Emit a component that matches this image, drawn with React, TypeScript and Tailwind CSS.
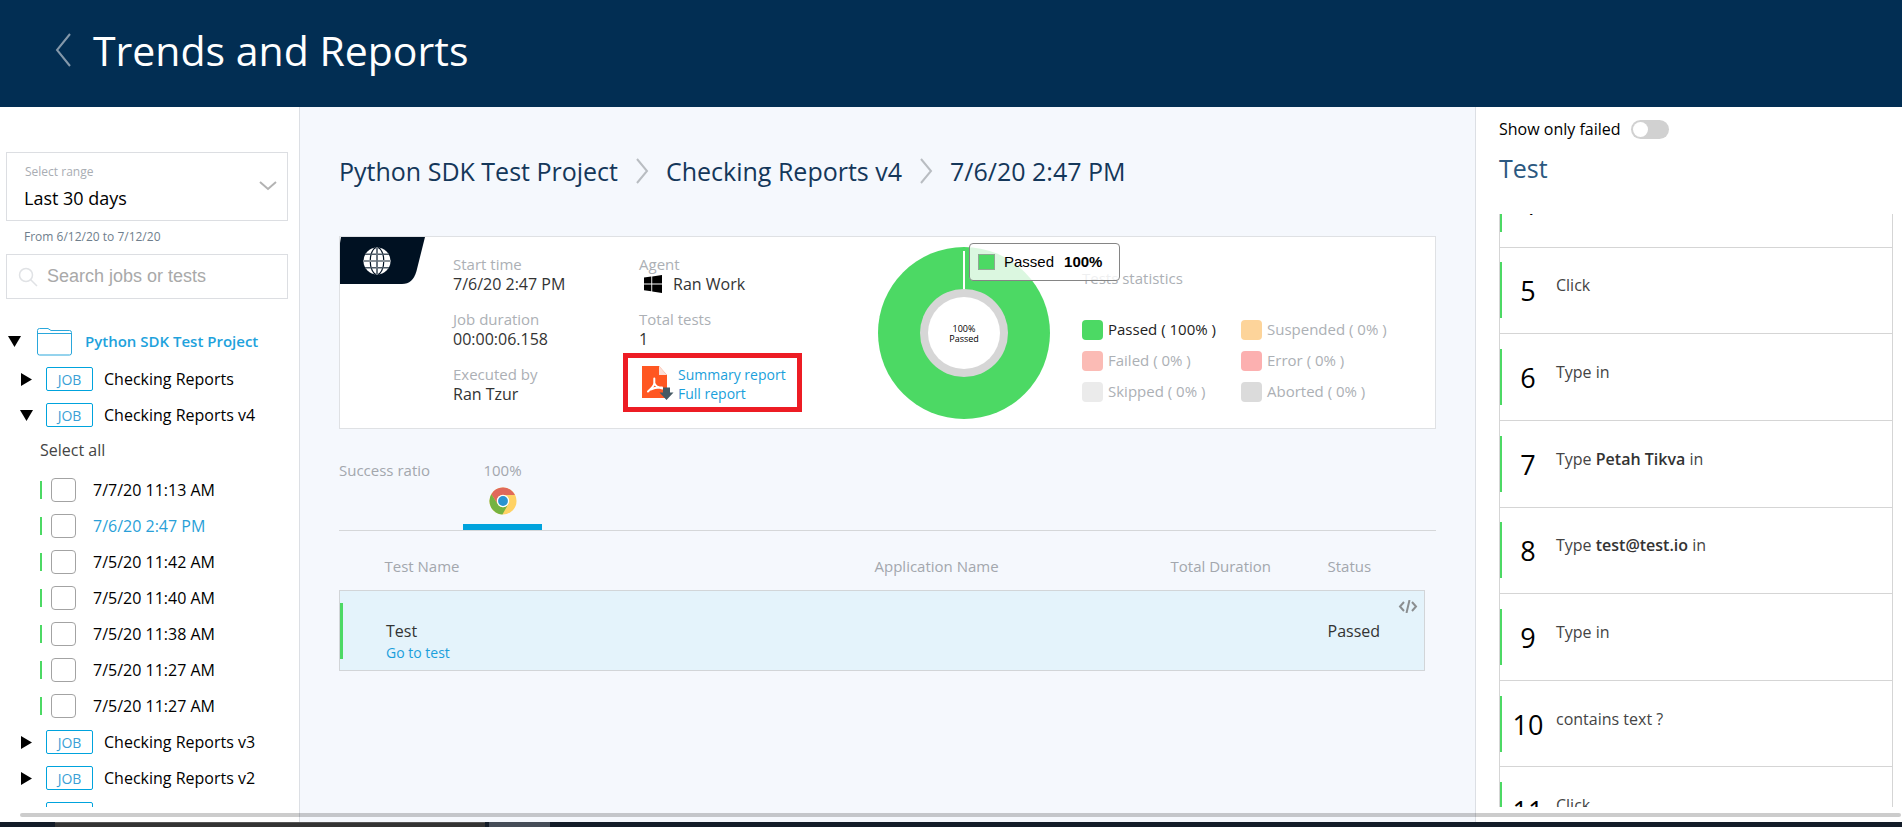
import { useState } from "react";

const jobRuns = [
  "7/7/20 11:13 AM",
  "7/6/20 2:47 PM",
  "7/5/20 11:42 AM",
  "7/5/20 11:40 AM",
  "7/5/20 11:38 AM",
  "7/5/20 11:27 AM",
  "7/5/20 11:27 AM",
];
const selectedRun = 1;

const statistics = [
  { label: "Passed ( 100% )", swatch: "bg-[#4cd964]", text: "text-[#222]" },
  { label: "Suspended ( 0% )", swatch: "bg-[#fdd49a]", text: "text-[#acb0b5]" },
  { label: "Failed ( 0% )", swatch: "bg-[#fbbbb5]", text: "text-[#acb0b5]" },
  { label: "Error ( 0% )", swatch: "bg-[#fcb0b0]", text: "text-[#acb0b5]" },
  { label: "Skipped ( 0% )", swatch: "bg-[#ebebeb]", text: "text-[#acb0b5]" },
  { label: "Aborted ( 0% )", swatch: "bg-[#dbdbdb]", text: "text-[#acb0b5]" },
];

const steps = [
  { n: 4, before: "Click" },
  { n: 5, before: "Click" },
  { n: 6, before: "Type in" },
  { n: 7, before: "Type ", value: "Petah Tikva", after: " in" },
  { n: 8, before: "Type ", value: "test@test.io", after: " in" },
  { n: 9, before: "Type in" },
  { n: 10, before: "contains text ?" },
  { n: 11, before: "Click" },
];

function Arrow({ open }: { open: boolean }) {
  return open ? (
    <svg width="13" height="11" viewBox="0 0 13 11" aria-hidden="true">
      <path d="M0 0h13L6.5 11z" fill="#000" />
    </svg>
  ) : (
    <svg width="13" height="13" viewBox="0 0 13 13" aria-hidden="true">
      <path d="M1 0v13L12 6.500z" fill="#000" />
    </svg>
  );
}

function JobRow({ name, open = false }: { name: string; open?: boolean }) {
  return (
    <button type="button" className="flex h-9 w-full shrink-0 items-center pl-5 text-left">
      <Arrow open={open} />
      <span className="ml-[13px] flex h-6 w-[47px] items-center justify-center rounded-xs border border-[#00a3dd] text-[14px] text-[#3a9fd6]">
        JOB
      </span>
      <span className="ml-[11px] text-[16px] text-black">{name}</span>
    </button>
  );
}

function Crumb() {
  return (
    <svg width="14" height="26" viewBox="0 0 14 26" className="mx-[17px]" aria-hidden="true">
      <path d="M2 1l10 12L2 25" fill="none" stroke="#b9bdc2" strokeWidth="2" />
    </svg>
  );
}

function Globe() {
  return (
    <svg width="28" height="28" viewBox="0 0 28 28" aria-hidden="true">
      <circle cx="14" cy="14" r="13.500" fill="#fff" />
      <g fill="none" stroke="#001122" strokeWidth="1.200">
        <ellipse cx="14" cy="14" rx="6.800" ry="13.500" />
        <path d="M2 7.300h24M2 20.700h24" stroke="#4d5a66" strokeWidth="1.600" />
        <path d="M0 14h28" stroke="#8a9299" strokeWidth="2" />
        <path d="M14 0v28" stroke="#6a757f" strokeWidth="2" />
      </g>
    </svg>
  );
}

function WindowsLogo() {
  return (
    <svg width="18" height="18" viewBox="0 0 18 18" aria-hidden="true">
      <path d="M0 2.600l7.300-1v6.900H0zM8.200 1.400L18 0v8.500H8.200zM0 9.400h7.300v6.900l-7.300-1zM8.200 9.400H18V18l-9.800-1.400z" fill="#000" />
    </svg>
  );
}

function PdfIcon() {
  return (
    <svg width="32" height="36" viewBox="0 0 32 36" aria-hidden="true">
      <path d="M0 1h17l8 9v23H0z" fill="#ff5722" />
      <path d="M17 1l8 9h-8z" fill="#fbe0d8" />
      <path d="M12.300 13.500v4.500q0 3-6.300 8.500M12.300 18q1 4 8.200 5.500M8.500 24.500q5-2.500 11.500-2" fill="none" stroke="#fff" strokeWidth="2" strokeLinecap="round" />
      <path d="M21 22.500h7v5h3.500L24.500 35l-7-7.500H21z" fill="#455a64" />
    </svg>
  );
}

function ChromeLogo() {
  return (
    <svg width="28" height="28" viewBox="0 0 28 28" aria-hidden="true">
      <circle cx="14" cy="14" r="13.500" fill="#ffd264" />
      <path d="M2.300 7.200A13.500 13.500 0 0 1 25.900 7.900H14a6.100 6.100 0 0 0-5.300 9.100z" fill="#e0695a" />
      <path d="M2.300 7.200A13.500 13.500 0 0 0 13.400 27.500L19.300 17.100a6.100 6.100 0 0 1-10.600 0z" fill="#75b340" />
      <circle cx="14" cy="14" r="6.200" fill="#fff" />
      <circle cx="14" cy="14" r="4.900" fill="#2a94d0" />
    </svg>
  );
}

function Field({ label, children }: { label: string; children: React.ReactNode }) {
  return (
    <div className="flex h-[55px] flex-col">
      <dt className="text-[15px] leading-[19px] text-[#acb0b5]">{label}</dt>
      <dd className="flex items-center text-[16px] leading-[20px] text-[#333]">{children}</dd>
    </div>
  );
}

function Sidebar() {
  return (
    <aside className="flex w-[300px] shrink-0 flex-col border-r border-[#dcdfe4] bg-white">
      <div className="mt-[45px] mr-[11px] ml-[6px]">
        <div className="relative h-[69px] border border-[#dcdee2]">
          <label htmlFor="range" className="pointer-events-none absolute top-[11px] left-[18px] text-[12px] leading-4 text-[#a9adb3]">
            Select range
          </label>
          <select
            id="range"
            className="h-full w-full appearance-none bg-transparent pt-[23px] pl-[17px] text-[18px] text-black outline-none"
          >
            <option>Last 30 days</option>
          </select>
          <svg width="18" height="10" viewBox="0 0 18 10" className="pointer-events-none absolute top-[28px] right-[10px]" aria-hidden="true">
            <path d="M1 1l8 7 8-7" fill="none" stroke="#b3b3b3" strokeWidth="2" />
          </svg>
        </div>
        <p className="pt-[8px] pl-[18px] text-[12px] leading-4 text-[#6f7e8c]">From 6/12/20 to 7/12/20</p>
        <div className="mt-[9px] flex h-[45px] items-center border border-[#dcdee2] pl-[11px]">
          <svg width="20" height="20" viewBox="0 0 20 20" aria-hidden="true">
            <circle cx="8" cy="8" r="6.500" fill="none" stroke="#e0e2e5" strokeWidth="1.500" />
            <path d="M12.500 12.500l6.500 6.500" stroke="#e0e2e5" strokeWidth="1.500" />
          </svg>
          <input
            type="text"
            aria-label="Search jobs or tests"
            placeholder="Search jobs or tests"
            className="ml-[9px] min-w-0 flex-1 bg-transparent font-['Liberation_Sans',sans-serif] text-[18px] outline-none placeholder:text-[#a9a9a9]"
          />
        </div>
      </div>
      <nav className="mt-[23px] mb-[15px] flex min-h-0 flex-1 flex-col overflow-hidden">
        <button type="button" className="flex h-[39px] shrink-0 items-center pl-2 text-left">
          <Arrow open />
          <svg width="35" height="28" viewBox="0 0 35 28" className="ml-4" aria-hidden="true">
            <path d="M.500 25V2.500Q.500.500 2.500.500H11l3 2h18.500q2 0 2 2V25q0 2-2 2h-30q-2 0-2-2zM.500 5.500h34" fill="none" stroke="#2aa7db" />
          </svg>
          <span className="ml-[13px] text-[15px] font-semibold text-[#1ea2dc]">Python SDK Test Project</span>
        </button>
        <JobRow name="Checking Reports" />
        <JobRow name="Checking Reports v4" open />
        <button type="button" className="h-[34px] shrink-0 pl-10 text-left text-[16px] text-[#444]">
          Select all
        </button>
        <ul className="mt-[5px] shrink-0">
          {jobRuns.map((run, i) => (
            <li key={i} className="pl-10">
              <label className="flex h-9 items-center">
                <span className="h-[18px] w-[2px] bg-[#4cd964]" />
                <input type="checkbox" className="ml-[9px] h-6 w-[25px] appearance-none rounded-sm border border-[#a3a3a3] bg-white" />
                <span className={i === selectedRun ? "ml-[17px] text-[16px] text-[#2a9fd8]" : "ml-[17px] text-[16px] text-black"}>{run}</span>
              </label>
            </li>
          ))}
        </ul>
        <JobRow name="Checking Reports v3" />
        <JobRow name="Checking Reports v2" />
        <JobRow name="Checking Reports v1" />
      </nav>
    </aside>
  );
}

function Donut() {
  return (
    <div className="relative h-[172px] w-[172px] shrink-0">
      <svg width="172" height="172" viewBox="0 0 172 172" aria-hidden="true">
        <circle cx="86" cy="86" r="86" fill="#4cd964" />
        <path d="M86 4v40" stroke="#fff" strokeWidth="2" />
        <circle cx="86" cy="86" r="44" fill="#d6d6d6" />
        <circle cx="86" cy="86" r="36" fill="#fff" />
        <text x="86" y="85" textAnchor="middle" fontSize="9" fill="#000">
          100%
        </text>
        <text x="86" y="95" textAnchor="middle" fontSize="9" fill="#000">
          Passed
        </text>
      </svg>
      <div
        role="tooltip"
        className="absolute -top-1 left-[91px] z-10 flex h-[38px] w-[151px] items-center rounded-sm border border-[#858585] bg-white/80 pl-2 font-['Liberation_Sans',sans-serif] text-[15px] text-black"
      >
        <span className="h-4 w-[17px] border border-[#8fa893] bg-[#4cd964]" />
        <span className="ml-[9px]">Passed</span>
        <b className="ml-[10px]">100%</b>
      </div>
    </div>
  );
}

function SummaryCard() {
  return (
    <section className="mt-12 flex h-[193px] border border-[#dfe1e4] bg-white">
      <div className="relative h-[47px] w-[85px] shrink-0">
        <svg width="85" height="47" viewBox="0 0 85 47" className="absolute inset-0" aria-hidden="true">
          <path d="M1 0H85L76.500 34Q73 47 62 47H0V6z" fill="#001122" />
        </svg>
        <div className="relative pt-[10px] pl-[23px]">
          <Globe />
        </div>
      </div>
      <dl className="mt-[18px] ml-[28px] w-[186px] shrink-0">
        <Field label="Start time">7/6/20 2:47 PM</Field>
        <Field label="Job duration">00:00:06.158</Field>
        <Field label="Executed by">Ran Tzur</Field>
      </dl>
      <div className="mt-[18px] w-[239px] shrink-0">
        <dl>
          <Field label="Agent">
            <span className="mr-[11px] ml-[5px]">
              <WindowsLogo />
            </span>
            Ran Work
          </Field>
          <Field label="Total tests">1</Field>
        </dl>
        <div className="-mt-3 -ml-4 flex h-[59px] w-[179px] items-center border-5 border-[#ed1c24] pl-[14px]">
          <PdfIcon />
          <div className="mt-[2px] ml-1 flex flex-col text-[14px] leading-[19px] text-[#1a9fdb]">
            <a href="#summary">Summary report</a>
            <a href="#full">Full report</a>
          </div>
        </div>
      </div>
      <div className="mt-[10px]">
        <Donut />
      </div>
      <div className="mt-[31px] ml-8 w-[318px]">
        <h2 className="text-[15px] leading-[20px] text-[#acb0b5]">Tests statistics</h2>
        <ul className="mt-[26px] grid grid-cols-2">
          {statistics.map((s) => (
            <li key={s.label} className="flex h-[31px] items-center">
              <span className={`h-5 w-[21px] rounded-sm ${s.swatch}`} />
              <span className={`ml-[5px] text-[15px] ${s.text}`}>{s.label}</span>
            </li>
          ))}
        </ul>
      </div>
    </section>
  );
}

function Results() {
  return (
    <>
      <div className="mt-[31px] flex h-[71px] border-b border-[#d5d7d9] text-[15px] leading-[20px] text-[#a3a7ad]">
        <span className="w-[124px]">Success ratio</span>
        <button type="button" className="flex w-[79px] flex-col items-center border-b-6 border-[#00a3dd]">
          <span>100%</span>
          <span className="mt-[7px]">
            <ChromeLogo />
          </span>
        </button>
      </div>
      <div className="mt-[16px] pr-[11px]">
        <table className="w-full table-fixed border-collapse text-left">
          <colgroup>
            <col className="w-[535px]" />
            <col />
            <col className="w-[157px]" />
            <col className="w-[97px]" />
          </colgroup>
          <thead>
            <tr className="h-[43px] text-[15px] text-[#a3a7ad]">
              <th className="pb-[4px] pl-[45px] font-normal">Test Name</th>
              <th className="pb-[4px] font-normal">Application Name</th>
              <th className="pb-[4px] font-normal">Total Duration</th>
              <th className="pb-[4px] font-normal">Status</th>
            </tr>
          </thead>
          <tbody>
            <tr className="h-[80px] border border-[#d2d5d8] bg-[#e4f3fb]">
              <td className="pt-3 align-top">
                <div className="flex items-start">
                  <span className="h-14 w-[3px] bg-[#4cd964]" />
                  <div className="flex flex-col pt-[17px] pl-[43px]">
                    <span className="text-[16px] leading-[22px] text-[#333]">Test</span>
                    <a href="#test" className="text-[14px] leading-[22px] text-[#1a9fdb]">
                      Go to test
                    </a>
                  </div>
                </div>
              </td>
              <td />
              <td />
              <td className="align-top text-[16px] text-[#333]">
                <div className="flex justify-end pt-[9px] pr-[6px]">
                  <button type="button" aria-label="View code">
                    <svg width="20" height="13" viewBox="0 0 20 13" className="block" aria-hidden="true">
                      <path d="M6 2L2 6.500 6 11M14 2l4 4.500-4 4.500M11.500 0l-3 13" fill="none" stroke="#8b8e90" strokeWidth="2" />
                    </svg>
                  </button>
                </div>
                <div className="pt-[7px] leading-[22px]">Passed</div>
              </td>
            </tr>
          </tbody>
        </table>
      </div>
    </>
  );
}

function StepsPanel() {
  const [failedOnly, setFailedOnly] = useState(false);
  return (
    <aside className="flex w-[427px] shrink-0 flex-col border-l border-[#dcdfe4] bg-white pr-[9px] pl-[23px]">
      <label className="mt-[11px] flex h-[22px] items-center text-[16px] text-black">
        Show only failed
        <input
          type="checkbox"
          role="switch"
          checked={failedOnly}
          onChange={(e) => setFailedOnly(e.target.checked)}
          className="ml-[10px] flex h-[19px] w-[38px] appearance-none items-center rounded-full bg-[#d1d1d1] px-[2px] before:h-[15px] before:w-[15px] before:rounded-full before:bg-white checked:bg-[#4cd964] checked:before:ml-auto"
        />
      </label>
      <h2 className="mt-[11px] text-[25px] leading-[34px] text-[#2b5880]">Test</h2>
      <div className="mt-[29px] mb-[15px] min-h-0 flex-1 overflow-hidden border-x border-[#d5d5d5]">
        <ol className="-mt-[53px] grid h-[693px] grid-rows-8">
          {steps.map((s) => (
            <li key={s.n} className="flex items-center border-b border-[#d5d5d5]">
              <span className="h-14 w-[2px] bg-[#4cd964]" />
              <span className="w-[52px] pt-[2px] text-center text-[27px] leading-[36px] text-black">{s.n}</span>
              <span className="ml-[2px] pb-[10px] text-[16px] text-[#444]">
                {s.before}
                {s.value && <b className="font-semibold text-[#333]">{s.value}</b>}
                {s.after}
              </span>
            </li>
          ))}
        </ol>
      </div>
    </aside>
  );
}

export default function App() {
  return (
    <div className="flex h-screen flex-col overflow-hidden bg-[#f5f8fd] font-['Open_Sans',sans-serif]">
      <header className="flex h-[107px] shrink-0 items-center bg-[#022e53] pb-[7px] pl-[55px]">
        <button type="button" aria-label="Back">
          <svg width="18" height="34" viewBox="0 0 18 34" className="block" aria-hidden="true">
            <path d="M15 1L2 17l13 16" fill="none" stroke="#8498aa" strokeWidth="2" />
          </svg>
        </button>
        <h1 className="ml-5 text-[41px] leading-[54px] text-white">Trends and Reports</h1>
      </header>
      <div className="relative flex min-h-0 flex-1">
        <Sidebar />
        <main className="min-w-0 flex-1 overflow-hidden px-[39px]">
          <nav className="mt-[47px] flex h-[34px] items-center text-[25px] leading-[34px] text-[#14375a]">
            <a href="#project">Python SDK Test Project</a>
            <Crumb />
            <a href="#job">Checking Reports v4</a>
            <Crumb />
            <a href="#run">7/6/20 2:47 PM</a>
          </nav>
          <SummaryCard />
          <Results />
        </main>
        <StepsPanel />
        <div className="absolute right-px bottom-[5px] left-5 h-1 rounded-full bg-black/20" />
      </div>
      <footer className="flex h-[5px] shrink-0 bg-[#131c28]">
        <div className="ml-[55px] w-[430px] border-t border-[#555] bg-[#333]" />
        <div className="ml-1 w-[61px] bg-[#454d58]" />
      </footer>
    </div>
  );
}
